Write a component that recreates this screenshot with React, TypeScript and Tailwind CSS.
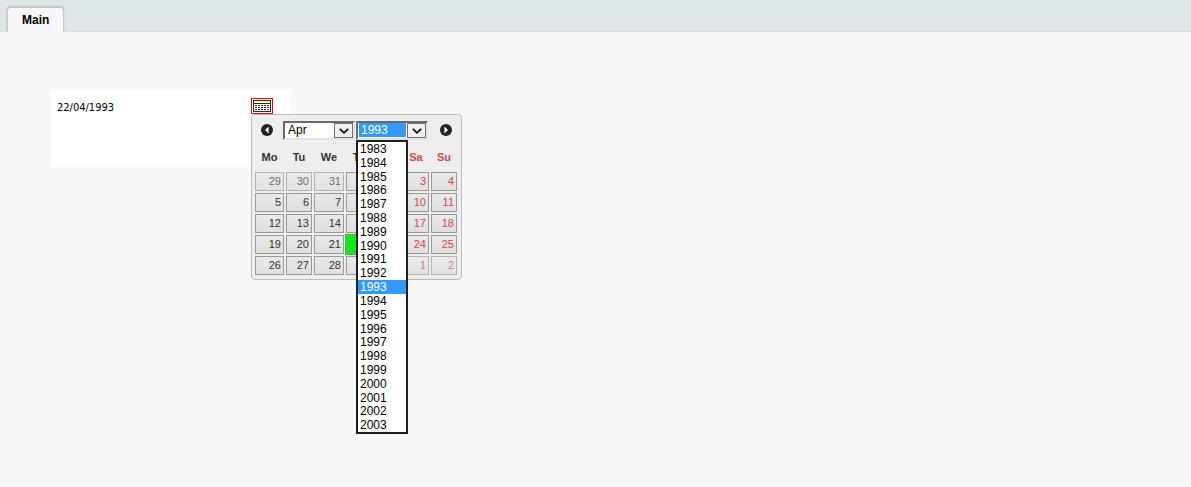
import React, { useState } from 'react';

const MONTHS = ['Jan', 'Feb', 'Mar', 'Apr', 'May', 'Jun', 'Jul', 'Aug', 'Sep', 'Oct', 'Nov', 'Dec'];
const YEARS = Array.from({ length: 21 }, (_, i) => 1983 + i);

const WEEKDAYS = [
  { label: 'Mo', width: 'w-[29px]' },
  { label: 'Tu', width: 'w-[26px]' },
  { label: 'We', width: 'w-[30px]' },
  { label: 'Th', width: 'w-[27px]' },
  { label: 'Fr', width: 'w-[26px]' },
  { label: 'Sa', width: 'w-[26px]' },
  { label: 'Su', width: 'w-[26px]' },
];

const WEEKS = [
  [29, 30, 31, 1, 2, 3, 4],
  [5, 6, 7, 8, 9, 10, 11],
  [12, 13, 14, 15, 16, 17, 18],
  [19, 20, 21, 22, 23, 24, 25],
  [26, 27, 28, 29, 30, 1, 2],
];

const isOtherMonth = (week: number, day: number) => (week === 0 && day > 20) || (week === 4 && day < 10);

const CalendarIcon = () => (
  <svg width="18" height="12" viewBox="0 0 18 12" shapeRendering="crispEdges" className="shrink-0">
    <rect width="18" height="12" fill="#2b2b2b" />
    <rect x="1" y="1" width="16" height="2" fill="#ffff9c" />
    <rect x="1" y="4" width="16" height="7" fill="#fff" />
    {[5, 7, 9].map((y) => (
      <g key={y}>
        {[2, 5, 8, 11].map((x) => (
          <rect key={x} x={x} y={y} width="2" height="1" fill="#2b2b2b" />
        ))}
        <rect x="14" y={y} width="2" height="1" fill="#e00000" />
      </g>
    ))}
  </svg>
);

const ArrowIcon: React.FC<{ direction: 'left' | 'right' }> = ({ direction }) => (
  <svg width="12" height="12" viewBox="0 0 12 12">
    <circle cx="6" cy="6" r="6" fill="#222" />
    <path d={direction === 'left' ? 'M7.6 2.6v6.8L4 6z' : 'M4.4 2.6v6.8L8 6z'} fill="#fff" />
  </svg>
);

const SelectArrow = () => (
  <span className="flex w-[19px] shrink-0 items-center justify-center border border-[#707070] bg-[#f0f0f0] pointer-events-none">
    <svg width="10" height="6" viewBox="0 0 10 6">
      <path d="M0.8 0.8L5 4.8L9.2 0.8" fill="none" stroke="#111" strokeWidth="1.8" />
    </svg>
  </span>
);

interface YearListProps {
  year: number;
  onPick: (year: number) => void;
}

const YearList: React.FC<YearListProps> = ({ year, onPick }) => (
  <ul
    role="listbox"
    aria-label="Years"
    className="absolute left-0 top-full z-20 grid h-[294px] w-[52px] auto-rows-fr border-2 border-[#1e1e1e] bg-white text-xs leading-[14px]"
  >
    {YEARS.map((y) => (
      <li
        key={y}
        role="option"
        aria-selected={y === year}
        onClick={() => onPick(y)}
        className={`min-h-0 cursor-default pl-[2px] ${y === year ? 'bg-[#3399ff] text-white' : 'text-black'}`}
      >
        {y}
      </li>
    ))}
  </ul>
);

const Calendar = () => {
  const [month, setMonth] = useState('Apr');
  const [year, setYear] = useState(1993);
  const [selected, setSelected] = useState('3-22');

  return (
    <div className="absolute left-0 top-full z-10 rounded border border-[#bbb] bg-[#eee] pl-px pr-[2px] pt-[6px] pb-[2px]">
      <div className="flex items-center gap-[10px] pl-2 pr-[7px]">
        <button type="button" aria-label="Previous month" className="-mt-px">
          <ArrowIcon direction="left" />
        </button>
        <div className="flex flex-1 gap-px">
          <div className="flex h-[19px] w-[72px] border-2 border-[#6a6a6a] border-r-[#e3e3e3] border-b-[#e3e3e3] bg-white">
            <select
              aria-label="Month"
              value={month}
              onChange={(e) => setMonth(e.target.value)}
              className="m-px mt-0 min-w-0 flex-1 appearance-none bg-white pl-[2px] text-xs leading-[14px] text-black outline-none"
            >
              {MONTHS.map((m) => (
                <option key={m}>{m}</option>
              ))}
            </select>
            <SelectArrow />
          </div>
          <div className="relative">
            <div className="flex h-[19px] w-[72px] border-2 border-[#6a6a6a] border-r-[#e3e3e3] border-b-[#e3e3e3] bg-white">
              <select
                aria-label="Year"
                value={year}
                onChange={(e) => setYear(Number(e.target.value))}
                className="m-px mt-0 min-w-0 flex-1 appearance-none bg-[#3399ff] pl-[2px] text-xs leading-[14px] text-white outline-none"
              >
                {YEARS.map((y) => (
                  <option key={y}>{y}</option>
                ))}
              </select>
              <SelectArrow />
            </div>
            <YearList year={year} onPick={setYear} />
          </div>
        </div>
        <button type="button" aria-label="Next month" className="-mt-px">
          <ArrowIcon direction="right" />
        </button>
      </div>

      <table className="border-separate border-spacing-[2px] text-[11px] leading-[17px]">
        <thead>
          <tr>
            {WEEKDAYS.map((d, i) => (
              <th key={d.label} className={`h-7 p-0 pt-[3px] text-center font-bold ${i > 4 ? 'text-[#cd4a4a]' : 'text-[#333]'}`}>
                <div className={d.width}>{d.label}</div>
              </th>
            ))}
          </tr>
        </thead>
        <tbody>
          {WEEKS.map((week, w) => (
            <tr key={w}>
              {week.map((day, i) => {
                const key = `${w}-${day}`;
                return (
                  <td key={key} className={`p-0 ${isOtherMonth(w, day) ? 'opacity-70' : ''}`}>
                    <button
                      type="button"
                      onClick={() => setSelected(key)}
                      className={`block h-[19px] w-full border border-[#999] pr-[2px] text-right ${
                        i > 4 ? 'text-[#cd4a4a]' : 'text-[#333]'
                      } ${
                        selected === key
                          ? 'bg-[#00ee11] outline outline-[#00dd00]'
                          : 'bg-linear-to-b from-[#e9e9e9] to-[#dfdfdf]'
                      }`}
                    >
                      {day}
                    </button>
                  </td>
                );
              })}
            </tr>
          ))}
        </tbody>
      </table>
    </div>
  );
};

export default function App() {
  const [date, setDate] = useState('22/04/1993');

  return (
    <div className="min-h-screen bg-[#f8f8f8] font-['Liberation_Sans',Arial,sans-serif]">
      <header className="flex h-8 items-end border-b border-[#d6dcdf] bg-[#dee6e9] px-[7px]">
        <a
          href="#main"
          className="-mb-px h-[25px] rounded-t border border-b-0 border-[#c4c9cc] bg-[#f8f8f8] px-[14px] pt-1 text-xs font-bold leading-4 text-black shadow-[0_-1px_2px_rgba(0,0,0,0.15)]"
        >
          Main
        </a>
      </header>

      <main className="px-[51px] pt-[58px]">
        <div className="flex h-[77px] w-60 items-start bg-white pt-2">
          <input
            type="text"
            aria-label="Date"
            value={date}
            onChange={(e) => setDate(e.target.value)}
            className="h-[18px] w-[200px] bg-transparent pl-[6px] font-['DejaVu_Sans_Condensed','DejaVu_Sans',sans-serif] text-[11px] leading-4 text-black outline-none"
          />
          <div className="relative">
            <button type="button" aria-label="Open calendar" className="flex h-4 w-[22px] items-center justify-center border border-[#f00000] bg-white">
              <CalendarIcon />
            </button>
            <Calendar />
          </div>
        </div>
      </main>
    </div>
  );
}
